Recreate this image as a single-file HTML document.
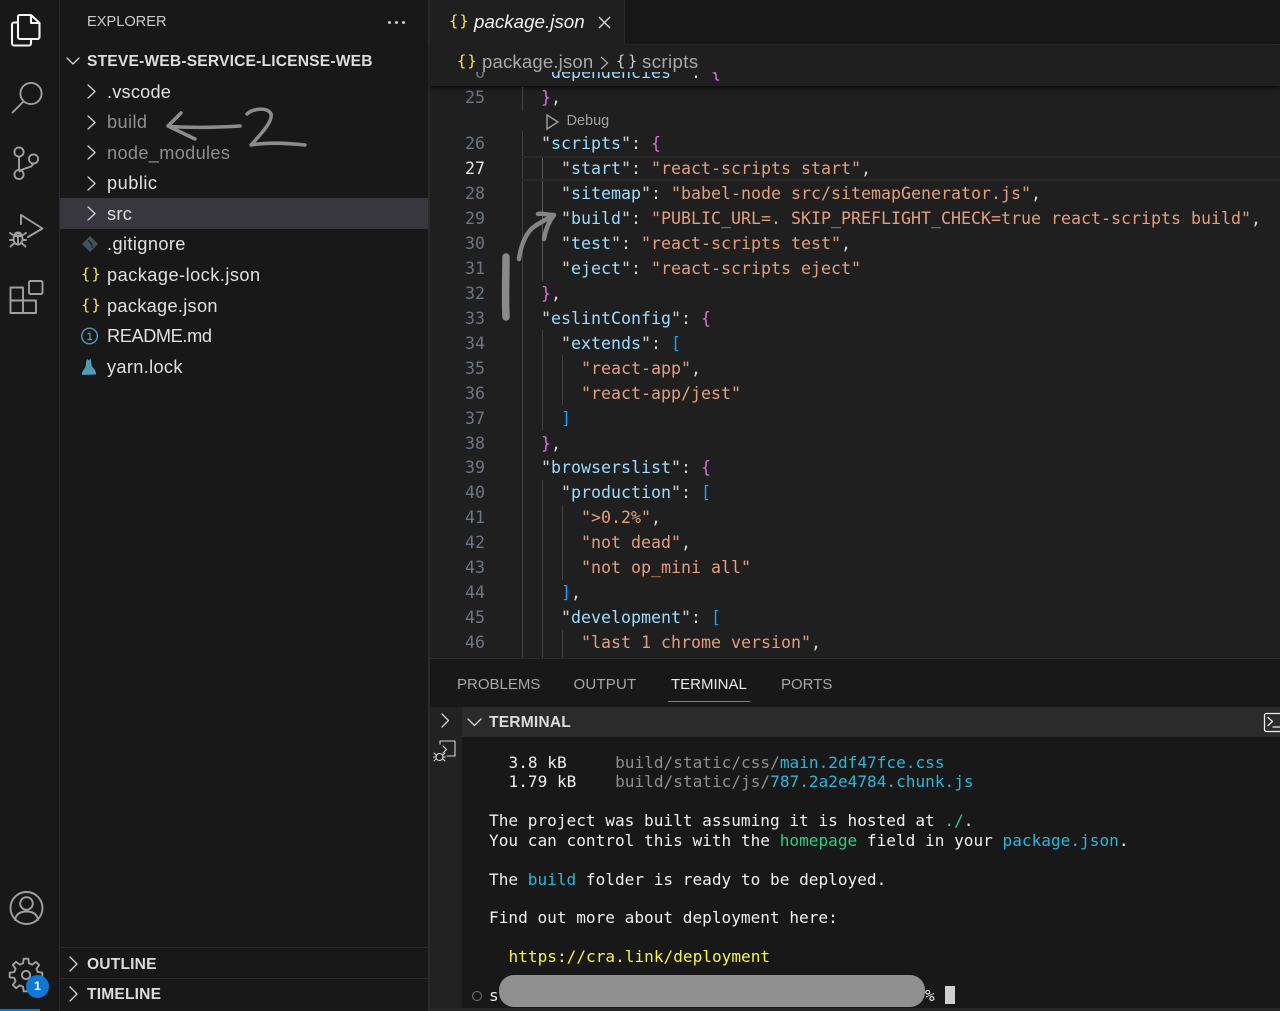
<!DOCTYPE html>
<html><head><meta charset="utf-8"><style>
*{margin:0;padding:0;box-sizing:border-box}
html,body{width:1280px;height:1011px;overflow:hidden;background:#181818}
body{position:relative;font-family:"Liberation Sans",sans-serif;color:#ccc}
.a{position:absolute;white-space:pre}
.r{position:absolute}
.s{font-size:18.2px;line-height:30px;left:107px;color:#e0e0e0}
.h{font-size:15.6px;line-height:20px;font-weight:700;color:#ddd;letter-spacing:.18px}
.c{font-family:"DejaVu Sans Mono",monospace;font-size:16.63px;line-height:25px;color:#ccc}
.n{font-family:"DejaVu Sans Mono",monospace;font-size:16.63px;line-height:25px;color:#6e7681;width:30px;left:455px;text-align:right}
.t{font-family:"DejaVu Sans Mono",monospace;font-size:16.1px;line-height:20px;color:#efefef}
.k{color:#9cdcfe}.v{color:#e39f7d}.p{color:#da70d6}.b{color:#179fff}.y{color:#ffd700}.w{color:#d4d4d4}
.m{color:#8f8f8f}.cy{color:#29b8db}.g{color:#23d18b}
.tb{font-size:15px;line-height:20px;color:#a8a8a8}
.br{color:#f5e84a;font-family:"DejaVu Sans Mono",monospace;font-size:15.5px;line-height:20px;letter-spacing:1px}
svg{position:absolute;overflow:visible;fill:none}
</style></head><body>

<div class="r" style="left:59px;top:0;width:1px;height:1011px;background:#2b2b2b"></div>
<div class="r" style="left:428px;top:0;width:2px;height:1011px;background:#2b2b2b"></div>
<div class="r" style="left:430px;top:0;width:850px;height:658px;background:#1f1f1f"></div>
<div class="r" style="left:430px;top:0;width:850px;height:44px;background:#181818"></div>
<div class="r" style="left:430px;top:0;width:195px;height:45px;background:#1f1f1f"></div>
<div class="r" style="left:625px;top:44px;width:655px;height:1px;background:#2b2b2b"></div>
<div class="r" style="left:624px;top:0;width:1px;height:45px;background:#2b2b2b"></div>

<!-- activity bar icons -->
<svg style="left:0;top:0" width="59" height="1011" stroke="#a0a0a0" stroke-width="1.900" stroke-linejoin="round" stroke-linecap="round">
<path d="M19 15h12l8.500 8v14a2 2 0 0 1-2 2H20a2 2 0 0 1-2-2V17a2 2 0 0 1 1-2zM31 15v8h8.500M18 22.500h-4a2 2 0 0 0-2 2v19a2 2 0 0 0 2 2h15a2 2 0 0 0 2-2v-4" stroke="#f4f4f4" stroke-width="2.100"/>
<circle cx="31" cy="93.500" r="10.600"/><path d="M23.500 101.500 12.500 112.500"/>
<circle cx="19" cy="152" r="4.600"/><circle cx="19" cy="174.500" r="4.600"/><circle cx="33.500" cy="159" r="4.600"/><path d="M19 156.500v13.500M33 163.500c-.5 5-9 3.500-13.500 8"/>
<path d="M21 215v9M21 215l21.500 13.500-14.500 8.500"/>
<ellipse cx="18" cy="239" rx="4.500" ry="5.500"/><path d="M14 236h8M18 236v8.500M15 234c1-2 5-2 6 0M10 233l4 2.500M26 233l-4 2.500M10 240h3.500M26 240h-3.500M10.500 246.500l3.500-3M25.500 246.500l-3.500-3"/>
<path d="M10.500 287.500h12.500v25.500H10.500zM10.500 300.500h25.500v12.500H10.500z"/><rect x="29" y="281" width="13.500" height="13" rx="1.500"/>
<circle cx="26.500" cy="908" r="16"/><circle cx="26.500" cy="903.500" r="6.300"/><path d="M15 920c1-6 5-8.500 11.500-8.500S37 914 38 920"/>
<g transform="translate(26 975) scale(1.100)" stroke-width="1.700"><path d="M10.670-2.660 14.850-2.090 14.850 2.090 10.670 2.660 9.430 5.670 11.980 9.030 9.030 11.980 5.670 9.430 2.660 10.670 2.090 14.850-2.090 14.850-2.660 10.670-5.670 9.430-9.030 11.980-11.980 9.030-9.430 5.670-10.670 2.660-14.850 2.090-14.850-2.090-10.670-2.660-9.430-5.670-11.980-9.030-9.030-11.980-5.670-9.430-2.660-10.670-2.090-14.850 2.090-14.850 2.660-10.670 5.670-9.430 9.030-11.980 11.980-9.030 9.430-5.670z"/><circle r="3.800"/></g>
</svg>
<div class="r" style="left:26px;top:975px;width:23px;height:23px;border-radius:50%;background:#0f78d4;color:#fff;font-size:12px;font-weight:700;line-height:23px;text-align:center">1</div>
<div class="r" style="left:0;top:1009px;width:40px;height:2px;background:#0078d4"></div>

<!-- sidebar -->
<div class="a" style="left:87px;top:12px;font-size:14.6px;line-height:20px;color:#ccc">EXPLORER</div>
<div class="r" style="left:388px;top:20.500px;width:3px;height:3px;border-radius:50%;background:#ccc"></div>
<div class="r" style="left:395px;top:20.500px;width:3px;height:3px;border-radius:50%;background:#ccc"></div>
<div class="r" style="left:402px;top:20.500px;width:3px;height:3px;border-radius:50%;background:#ccc"></div>
<div class="a h" style="left:87px;top:52px">STEVE-WEB-SERVICE-LICENSE-WEB</div>
<div class="r" style="left:60px;top:198px;width:368px;height:31px;background:#37373d"></div>
<svg style="left:0;top:0" width="430" height="1011" stroke="#d5d5d5" stroke-width="1.300" stroke-linecap="round" stroke-linejoin="round">
<path d="M67 58l6 6 6-6M88 85l7 6.500-7 6.500M88 116l7 6.500-7 6.500M88 146l7 6.500-7 6.500M88 177l7 6.500-7 6.500M88 207l7 6.500-7 6.500M70 957l7 7-7 7M70 987l7 7-7 7"/>
</svg>
<div class="a s" style="top:77px;letter-spacing:.2px">.vscode</div>
<div class="a s" style="top:107px;color:#8f8f8f;letter-spacing:.4px">build</div>
<div class="a s" style="top:138px;color:#8f8f8f;letter-spacing:.33px">node_modules</div>
<div class="a s" style="top:168px;letter-spacing:.5px">public</div>
<div class="a s" style="top:199px;letter-spacing:.3px">src</div>
<div class="a s" style="top:229px;letter-spacing:.4px">.gitignore</div>
<div class="a s" style="top:260px;letter-spacing:.47px">package-lock.json</div>
<div class="a s" style="top:290.500px;letter-spacing:.3px">package.json</div>
<div class="a s" style="top:321px;letter-spacing:-.4px">README.md</div>
<div class="a s" style="top:351.500px;letter-spacing:.33px">yarn.lock</div>
<svg style="left:0;top:0" width="430" height="400">
<path d="M90 236l8 8-8 8-8-8z" fill="#41535b"/><path d="M88 240l4 4v4M91 243l-1 1" stroke="#1a1a1a" stroke-width="1"/>
<circle cx="89.500" cy="336" r="7.800" stroke="#519aba" stroke-width="1.400"/><path d="M87.500 333.500h2.500v6M87.500 339.500h4.500M89.500 331v.500" stroke="#519aba" stroke-width="1.300"/>
<path d="M82 375c-.5-4 2-5 3.500-8 .5-3 .5-6 1.500-8l2 1.500 1.500-2c1 3 .5 5 1.500 8 1.500 2 4 3 4 8z" fill="#519aba"/>
</svg>
<div class="a br" style="left:81px;top:264px">{}</div>
<div class="a br" style="left:81px;top:295px">{}</div>

<div class="r" style="left:60px;top:947px;width:368px;height:1px;background:#2b2b2b"></div>
<div class="r" style="left:60px;top:978px;width:368px;height:1px;background:#2b2b2b"></div>
<div class="a h" style="left:87px;top:954.500px">OUTLINE</div>
<div class="a h" style="left:87px;top:984.500px">TIMELINE</div>

<!-- tab -->
<div class="a br" style="left:449px;top:11px">{}</div>
<div class="a" style="left:474px;top:12px;font-size:18.8px;line-height:20px;font-style:italic;color:#f0f0f0">package.json</div>
<svg style="left:598px;top:16px" width="13" height="13" stroke="#d8d8d8" stroke-width="1.400"><path d="M1 1l11 11M12 1 1 12"/></svg>
<!-- breadcrumbs -->
<div class="r" style="left:430px;top:45px;width:850px;height:41px;background:#1f1f1f;box-shadow:0 2px 4px #0c0c0c"></div>
<div class="a c k" style="left:541px;top:60px;clip-path:inset(12px 0 4px 0)"><span class="w">"</span>dependencies<span class="w">" : </span><span class="p">{</span></div>
<div class="a n" style="top:60px;clip-path:inset(12px 0 4px 0)">6</div>
<div class="a br" style="left:457px;top:51px">{}</div>
<div class="a" style="left:482px;top:52px;font-size:18.6px;line-height:20px;color:#a8a8a8;letter-spacing:.15px">package.json</div>
<svg style="left:600px;top:56px" width="9" height="13" stroke="#a8a8a8" stroke-width="1.300"><path d="M1 1l6.500 6L1 13"/></svg>
<div class="a" style="left:616px;top:51px;font-family:'DejaVu Sans Mono',monospace;font-size:15.5px;line-height:20px;color:#ccc;letter-spacing:2.500px">{}</div>
<div class="a" style="left:642px;top:52px;font-size:18.6px;line-height:20px;color:#a8a8a8;letter-spacing:.4px">scripts</div>

<div class="r" style="left:522px;top:87px;width:1px;height:24px;background:#404040"></div>
<div class="r" style="left:522px;top:131px;width:1px;height:527px;background:#404040"></div>
<div class="r" style="left:542px;top:156px;width:1px;height:125px;background:#585858"></div>
<div class="r" style="left:542px;top:330px;width:1px;height:100px;background:#404040"></div>
<div class="r" style="left:542px;top:480px;width:1px;height:178px;background:#404040"></div>
<div class="r" style="left:562px;top:355px;width:1px;height:50px;background:#404040"></div>
<div class="r" style="left:562px;top:505px;width:1px;height:75px;background:#404040"></div>
<div class="r" style="left:562px;top:630px;width:1px;height:28px;background:#404040"></div>
<div class="r" style="left:522px;top:156px;width:758px;height:25px;border-top:2px solid #282828;border-bottom:2px solid #282828"></div>

<div class="a n" style="top:85px">25</div>
<div class="a c" style="left:541px;top:85px"><span class="p">}</span><span class="w">,</span></div>
<svg style="left:546px;top:114px" width="14" height="16" stroke="#9a9a9a" stroke-width="1.500"><path d="M1 1l11 7-11 7z"/></svg>
<div class="a" style="left:566.500px;top:111px;font-size:14.500px;line-height:20px;color:#a0a0a0">Debug</div>
<div class="a n" style="top:131px">26</div><div class="a c" style="left:541px;top:131px"><span class="w">"</span><span class="k">scripts</span><span class="w">": </span><span class="p">{</span></div>
<div class="a n" style="top:156px;color:#e6e6e6">27</div><div class="a c" style="left:561px;top:156px"><span class="w">"</span><span class="k">start</span><span class="w">": </span><span class="v">"react-scripts start"</span><span class="w">,</span></div>
<div class="a n" style="top:181px">28</div><div class="a c" style="left:561px;top:181px"><span class="w">"</span><span class="k">sitemap</span><span class="w">": </span><span class="v">"babel-node src/sitemapGenerator.js"</span><span class="w">,</span></div>
<div class="a n" style="top:206px">29</div><div class="a c" style="left:561px;top:206px"><span class="w">"</span><span class="k">build</span><span class="w">": </span><span class="v">"PUBLIC_URL=. SKIP_PREFLIGHT_CHECK=true react-scripts build"</span><span class="w">,</span></div>
<div class="a n" style="top:231px">30</div><div class="a c" style="left:561px;top:231px"><span class="w">"</span><span class="k">test</span><span class="w">": </span><span class="v">"react-scripts test"</span><span class="w">,</span></div>
<div class="a n" style="top:256px">31</div><div class="a c" style="left:561px;top:256px"><span class="w">"</span><span class="k">eject</span><span class="w">": </span><span class="v">"react-scripts eject"</span></div>
<div class="a n" style="top:281px">32</div><div class="a c" style="left:541px;top:281px"><span class="p">}</span><span class="w">,</span></div>
<div class="a n" style="top:306px">33</div><div class="a c" style="left:541px;top:306px"><span class="w">"</span><span class="k">eslintConfig</span><span class="w">": </span><span class="p">{</span></div>
<div class="a n" style="top:331px">34</div><div class="a c" style="left:561px;top:331px"><span class="w">"</span><span class="k">extends</span><span class="w">": </span><span class="b">[</span></div>
<div class="a n" style="top:356px">35</div><div class="a c" style="left:581px;top:356px"><span class="v">"react-app"</span><span class="w">,</span></div>
<div class="a n" style="top:381px">36</div><div class="a c" style="left:581px;top:381px"><span class="v">"react-app/jest"</span></div>
<div class="a n" style="top:406px">37</div><div class="a c" style="left:561px;top:406px"><span class="b">]</span></div>
<div class="a n" style="top:431px">38</div><div class="a c" style="left:541px;top:431px"><span class="p">}</span><span class="w">,</span></div>
<div class="a n" style="top:455px">39</div><div class="a c" style="left:541px;top:455px"><span class="w">"</span><span class="k">browserslist</span><span class="w">": </span><span class="p">{</span></div>
<div class="a n" style="top:480px">40</div><div class="a c" style="left:561px;top:480px"><span class="w">"</span><span class="k">production</span><span class="w">": </span><span class="b">[</span></div>
<div class="a n" style="top:505px">41</div><div class="a c" style="left:581px;top:505px"><span class="v">"&gt;0.2%"</span><span class="w">,</span></div>
<div class="a n" style="top:530px">42</div><div class="a c" style="left:581px;top:530px"><span class="v">"not dead"</span><span class="w">,</span></div>
<div class="a n" style="top:555px">43</div><div class="a c" style="left:581px;top:555px"><span class="v">"not op_mini all"</span></div>
<div class="a n" style="top:580px">44</div><div class="a c" style="left:561px;top:580px"><span class="b">]</span><span class="w">,</span></div>
<div class="a n" style="top:605px">45</div><div class="a c" style="left:561px;top:605px"><span class="w">"</span><span class="k">development</span><span class="w">": </span><span class="b">[</span></div>
<div class="a n" style="top:630px">46</div><div class="a c" style="left:581px;top:630px"><span class="v">"last 1 chrome version"</span><span class="w">,</span></div>

<!-- panel -->
<div class="r" style="left:430px;top:658px;width:850px;height:353px;background:#181818;border-top:1px solid #2b2b2b"></div>
<div class="a tb" style="left:457px;top:675px">PROBLEMS</div>
<div class="a tb" style="left:573.500px;top:675px;letter-spacing:.2px">OUTPUT</div>
<div class="a tb" style="left:671px;top:675px;color:#e8e8e8">TERMINAL</div>
<div class="a tb" style="left:781px;top:675px">PORTS</div>
<div class="r" style="left:668px;top:701px;width:82px;height:1px;background:#3a94dc"></div>
<div class="r" style="left:430px;top:707px;width:850px;height:30px;background:#2b2b2b"></div>
<div class="r" style="left:430px;top:707px;width:32px;height:304px;background:#222"></div>
<svg style="left:0;top:0" width="1280" height="1011" stroke="#d5d5d5" stroke-width="1.300" stroke-linejoin="round" stroke-linecap="round">
<path d="M442 714l6.500 6.500-6.500 6.500M468 719l6.500 6.500 6.500-6.500"/>
<path d="M440 744v-3h15v15h-8M443 746l3.500 3.500-3.500 3.500" stroke-width="1.100"/>
<circle cx="439.500" cy="757" r="3.500" stroke-width="1.100"/><path d="M434 753l2 2M445 753l-2 2M433.500 757h2.500M443 757h2.500M434 761l2-2M445 761l-2-2" stroke-width="1"/>
<rect x="1264.500" y="713.500" width="30" height="18" rx="2" stroke="#eee" stroke-width="1.300"/><path d="M1268 717.500l4.500 4-4.500 4M1273 727h7" stroke="#eee" stroke-width="1.300"/>
</svg>
<div class="a h" style="left:489px;top:712.500px">TERMINAL</div>

<div class="a t" style="left:508.500px;top:753px">3.8 kB     <span class="m">build/static/css/</span><span class="cy">main.2df47fce.css</span></div>
<div class="a t" style="left:508.500px;top:772px">1.79 kB    <span class="m">build/static/js/</span><span class="cy">787.2a2e4784.chunk.js</span></div>
<div class="a t" style="left:489px;top:811px">The project was built assuming it is hosted at <span class="g">./</span>.</div>
<div class="a t" style="left:489px;top:830.500px">You can control this with the <span class="g">homepage</span> field in your <span class="cy">package.json</span>.</div>
<div class="a t" style="left:489px;top:869.500px">The <span class="cy">build</span> folder is ready to be deployed.</div>
<div class="a t" style="left:489px;top:908px">Find out more about deployment here:</div>
<div class="a t" style="left:508.500px;top:947px;color:#f5f543">https://cra.link/deployment</div>
<div class="r" style="left:472px;top:991px;width:10px;height:10px;border-radius:50%;border:1.500px solid #777"></div>
<div class="a t" style="left:489px;top:986px">s</div>
<div class="r" style="left:499px;top:975px;width:426px;height:32px;border-radius:15px;background:#909090"></div>
<div class="a t" style="left:925px;top:986px">%</div>
<div class="r" style="left:945px;top:986px;width:10px;height:18px;background:#d0d0d0"></div>
<div class="r" style="left:430px;top:1008px;width:850px;height:3px;background:#262626"></div>

<!-- hand-drawn annotations -->
<svg style="left:0;top:0" width="1280" height="1011" stroke="#8c8c8c" stroke-linecap="round" stroke-linejoin="round">
<path d="M181 113 168 126l27 13M169 126.500c24 1.500 48 1 71-.500" stroke-width="3.500"/>
<path d="M247 114c7-6 21-7 24 0 2 7-9 19-20 31 17-3 35-2 54 0" stroke-width="3.500"/>
<path d="M519 259c2-15 8-28 16-33 6-4 12-7 19-11-6 0-12-2-16-1M554 215c-4 5-8 12-10 24" stroke-width="4.500" stroke="#858585"/>
<path d="M506 257c0 18-1 36 0 60" stroke-width="7.500" stroke="#8a8a8a"/>
</svg>
</body></html>
